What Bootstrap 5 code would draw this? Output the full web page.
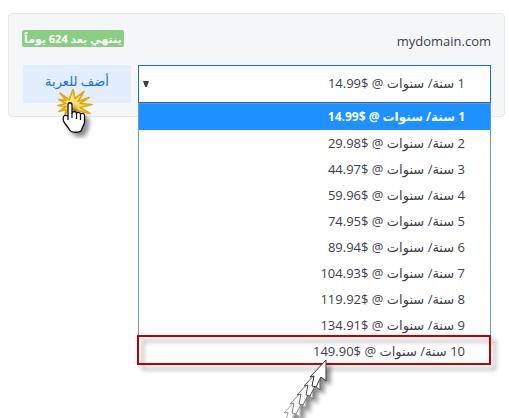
<!DOCTYPE html>
<html lang="ar" dir="rtl">
<head>
<meta charset="utf-8">
<meta name="viewport" content="width=device-width, initial-scale=1">
<title>mydomain.com</title>
<link rel="stylesheet" href="https://cdn.jsdelivr.net/npm/bootstrap@5.3.0/dist/css/bootstrap.min.css">
<style>
body{font-family:"Open Sans","DejaVu Sans",sans-serif;color:#3c4049;font-size:13px}
.page-wrap{padding:13px 4px 0 8px;direction:ltr;overflow:hidden}
.domain-card{background:#f5f6f8;border:1px solid #e4e6e9;border-radius:4px;padding:13px}
.domain-head{height:38px;padding-top:3px}
.domain-name{font-size:13px;line-height:22px}
.expiry-tag{background:#8ace84;color:#fff;font-weight:700;font-size:11px;line-height:17px;padding:0 2px;border-radius:2px}
.row-gap{gap:7px;padding-left:1px}
.add-btn{width:108px;height:38px;background:#e2eefd;color:#1a6fdb;border:0;border-radius:2px;padding:0 0 4px;font-size:13px}
.click-mark{left:31px;top:22px;width:44px;height:52px}
.term-select,.term-select:focus{height:38px;border:1px solid #1170d8;border-radius:0;background:#fff;color:inherit;font-size:13px;padding:0 25px 0 20px;box-shadow:none;appearance:none;direction:rtl}
.term-arrow{left:5px;top:16px;width:6px;height:6px;pointer-events:none}
.term-list{top:100%;left:0;right:0;background:#fff;border:1px solid #6f95d8;direction:rtl}
.term-item{display:block;width:100%;height:26px;line-height:26px;border:0;background:#fff;color:inherit;text-align:start;padding:0 25px 0 0}
.term-item.chosen{background:#1e90ff;color:#fff;font-weight:700;font-size:12px}
.marked::after{content:"";position:absolute;inset:-3px -1px -1px -2px;border:2px solid #c00000;filter:drop-shadow(5px 5px 2px rgba(0,0,0,.35));pointer-events:none}
.trail{left:141px;top:252px;width:55px;height:64px;pointer-events:none}
</style>
<script src="https://cdn.jsdelivr.net/npm/bootstrap@5.3.0/dist/js/bootstrap.bundle.min.js"></script>
</head>
<body>
<main class="page-wrap min-vh-100">
<section class="domain-card">
<div class="domain-head d-flex justify-content-between align-items-start">
<span class="expiry-tag" dir="rtl">ينتهي بعد 624 يوماً</span>
<span class="domain-name">mydomain.com</span>
</div>
<div class="d-flex row-gap">
<button type="button" class="add-btn position-relative" dir="rtl">أضف للعربة
<svg class="click-mark position-absolute" viewBox="0 0 44 52" aria-hidden="true">
<defs><filter id="soft" x="-40%" y="-40%" width="200%" height="200%"><feDropShadow dx="4" dy="4" stdDeviation="2" flood-opacity=".45"/></filter></defs>
<path d="M15 13 6 6l6 7.500-7-1 7 4-8 2 8 1-7 5 7-2-1 5 6-6 6 2 13 3-10-6 12-3-12-1 9-6-11 4 6-10-9 7-2-9z" fill="#ffe27a" stroke="#e3a90c" stroke-width="1.700" stroke-linejoin="round"/>
<path d="M14 33V18c0-3 4-3 4 0v8c1-2 4-2 4.500 0 1-1 3.500-1 4 1 1-1 3.500-1 4 1v7c0 3-2 4-3 8-1 3-10 3-12 0-1-3-5-6-6-9-1-4 0-7 4.500-5" fill="#fff" stroke="#111" stroke-width="1.300" stroke-linejoin="round" filter="url(#soft)"/>
<path d="M18 26v5M22.500 26v6M26.500 27v6" stroke="#111" stroke-width="1.200" fill="none"/>
</svg>
</button>
<div class="position-relative flex-grow-1">
<select class="form-select term-select" aria-label="المدة"><option>1 سنة/ سنوات @ $14.99</option></select>
<svg class="term-arrow position-absolute" viewBox="0 0 7 7" aria-hidden="true"><path d="M0 0h7L4.500 7h-2z" fill="#3c4049"/></svg>
<div class="term-list position-absolute">
<button type="button" class="term-item chosen">1 سنة/ سنوات @ $14.99</button>
<button type="button" class="term-item">2 سنة/ سنوات @ $29.98</button>
<button type="button" class="term-item">3 سنة/ سنوات @ $44.97</button>
<button type="button" class="term-item">4 سنة/ سنوات @ $59.96</button>
<button type="button" class="term-item">5 سنة/ سنوات @ $74.95</button>
<button type="button" class="term-item">6 سنة/ سنوات @ $89.94</button>
<button type="button" class="term-item">7 سنة/ سنوات @ $104.93</button>
<button type="button" class="term-item">8 سنة/ سنوات @ $119.92</button>
<button type="button" class="term-item">9 سنة/ سنوات @ $134.91</button>
<button type="button" class="term-item marked position-relative">10 سنة/ سنوات @ $149.90</button>
<svg class="trail position-absolute" viewBox="0 0 55 64" aria-hidden="true">
<defs><path id="ptr" d="M0 0v21l-5-4-5 10-4-1 2-10-4 1z" fill="#fff" stroke-linejoin="round"/></defs>
<g filter="url(#soft)">
<use href="#ptr" x="20" y="40" stroke="#aaa"/>
<use href="#ptr" x="26" y="31" stroke="#888"/>
<use href="#ptr" x="33" y="22" stroke="#666"/>
<use href="#ptr" x="40" y="13" stroke="#555"/>
<use href="#ptr" x="46" y="4" stroke="#333"/>
</g>
</svg>
</div>
</div>
</div>
</section>
</main>
</body>
</html>
